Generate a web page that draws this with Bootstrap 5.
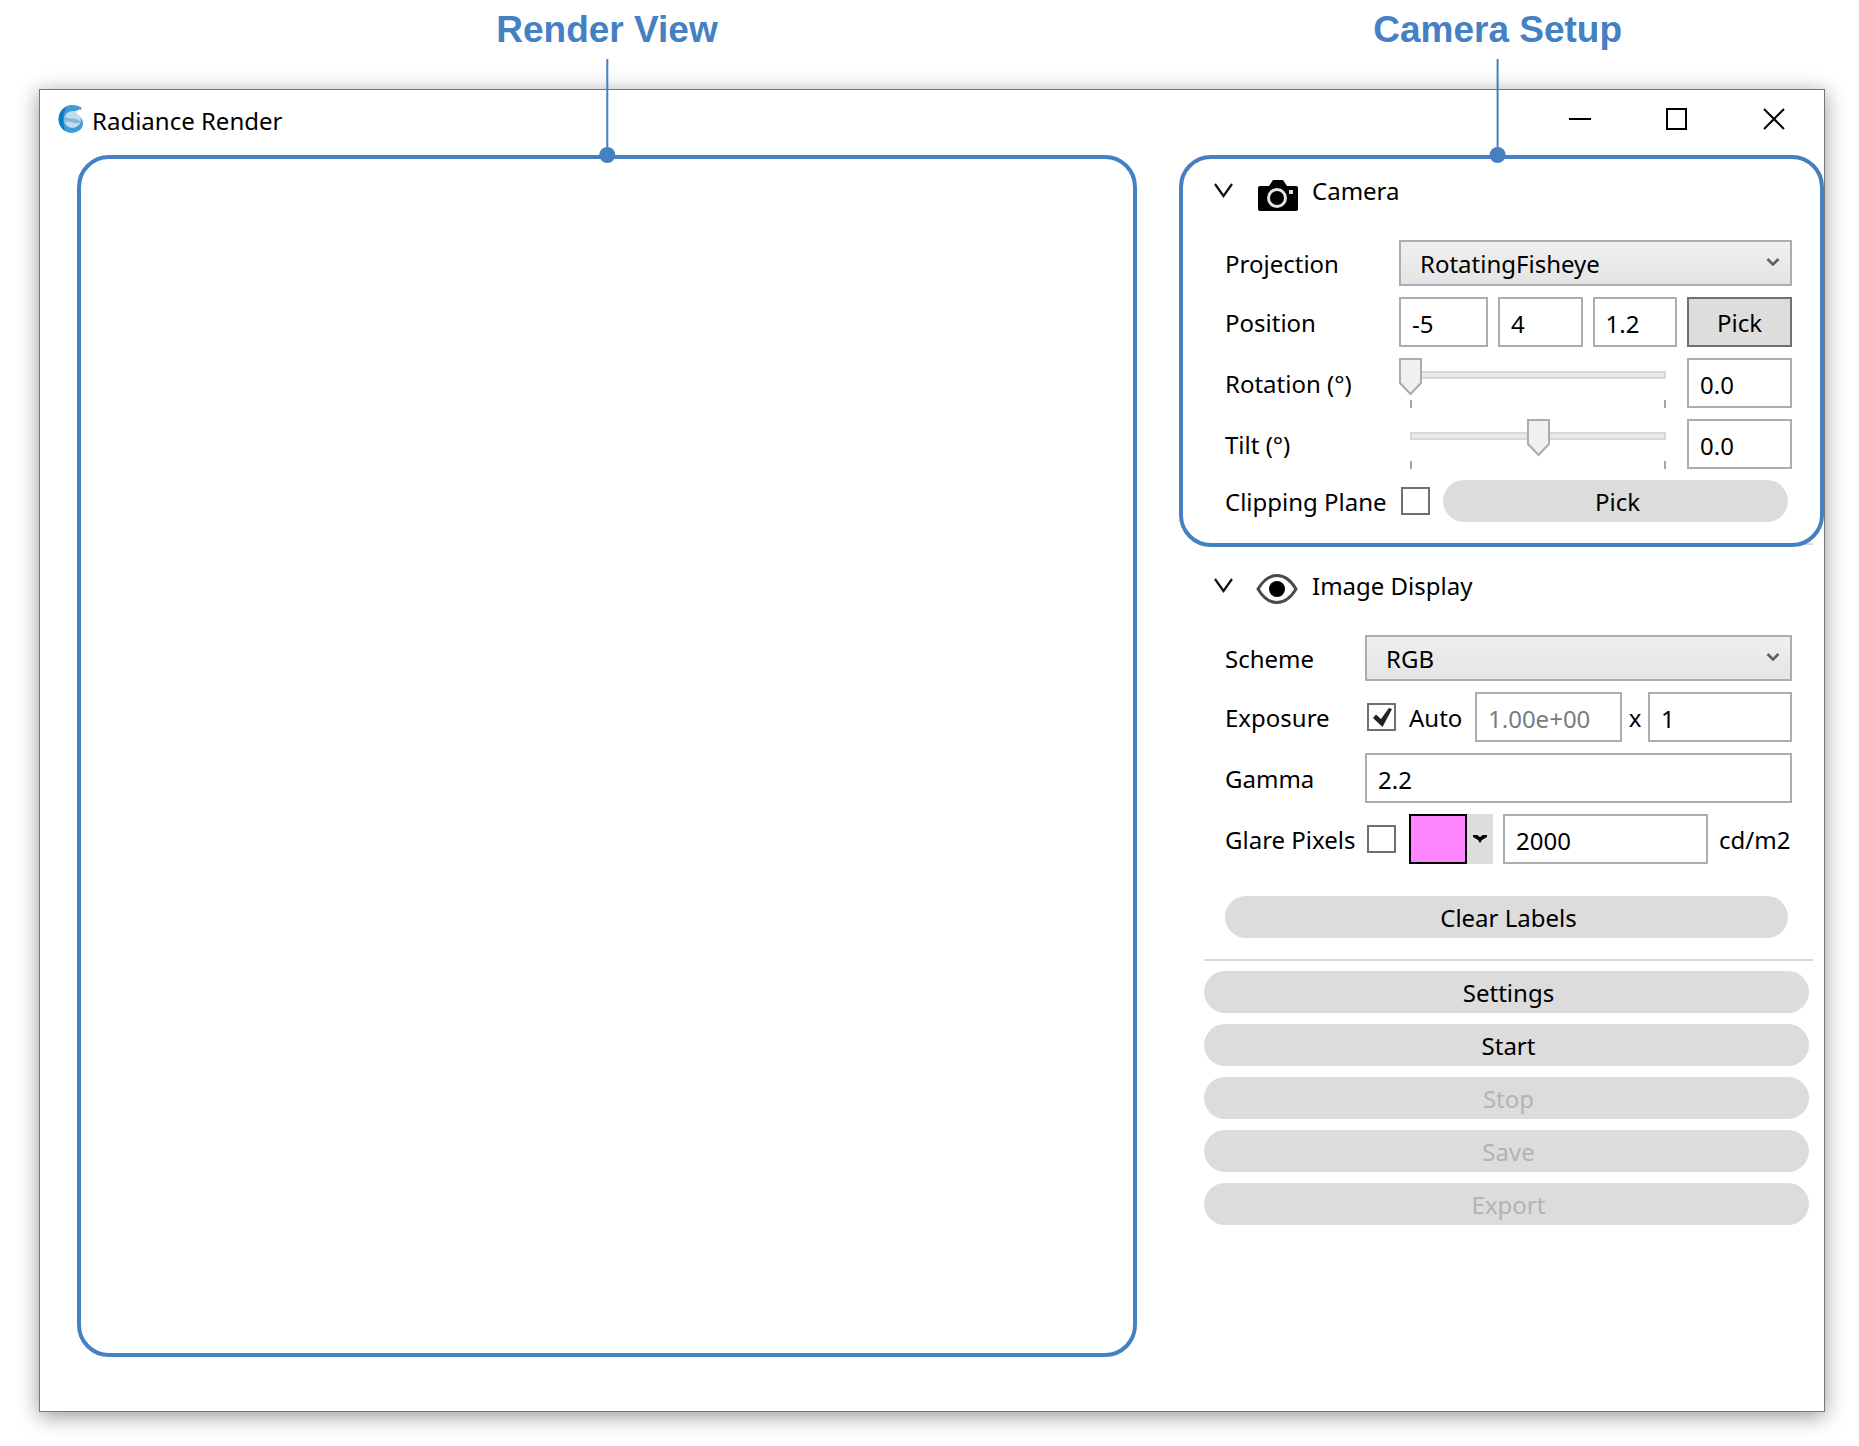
<!DOCTYPE html>
<html lang="en">
<head>
<meta charset="utf-8">
<meta name="viewport" content="width=device-width, initial-scale=1">
<title>Radiance Render</title>
<link href="https://cdn.jsdelivr.net/npm/bootstrap@5.3.0/dist/css/bootstrap.min.css" rel="stylesheet">
<style>
  :root { --note: #4480c2; --face: #dcdcdc; --edge: #abadb3; }
  body { font-family: "Noto Sans", "Open Sans", sans-serif; font-size: 24px; line-height: 32px; color: #000; background: #fff; }
  .stage { min-height: 100vh; padding: 89px 34px 34px 39px; }
  .app-window { border: 1px solid #777; background: #fff; box-shadow: 0 4px 20px rgba(0,0,0,.42); }
  .title-bar { height: 65px; padding: 0 38px 8px 18px; }
  .title-bar h1 { font-size: 24px; line-height: 32px; font-weight: 400; padding-top: 4px; }
  .win-btn { border: 0; background: none; padding: 0; width: 24px; height: 24px; display: block; }
  .win-btns { gap: 73px; }
  .work-area { padding: 0 11px 54px 37px; gap: 67px; }

  /* annotation frames and their leader lines */
  .frame { border: 4px solid var(--note); border-radius: 32px; }
  .frame-over { position: absolute; inset: 0 -11px -4px -25px; pointer-events: none; }
  .callout { position: absolute; bottom: 100%; left: 50%; transform: translateX(-50%); margin-bottom: 4px; color: var(--note);
    font: 700 37px/44px "Liberation Sans", Arial, sans-serif; white-space: nowrap; }
  .frame-over .callout { left: 49.4%; }
  .leader { width: 2px; height: 96px; background: var(--note); margin-top: 7px; }
  .leader-dot { width: 16px; height: 16px; border-radius: 50%; background: var(--note); margin: -8px 0; }

  .side-panel { flex: 0 0 609px; }
  .group { padding: 15px 0 21px; border-bottom: 2px solid #d9d9d9; margin-bottom: 5px; }
  .group-head { border: 0; background: none; padding: 0 9px; height: 42px; margin-bottom: 28px; color: #000; gap: 14px; }
  .group-head svg { height: 42px; }
  .fields { padding: 0 21px; gap: 11px; }
  .field { height: 50px; }
  .field.low { height: 46px; }
  .field.pill-row { height: 42px; padding-right: 4px; }
  .field.clear-row { margin-top: 21px; }
  .lab { flex: 0 0 140px; white-space: nowrap; }
  .wide .lab { flex-basis: 174px; }
  .lab, .auto-lab, .times, .unit { padding-top: 2px; }
  .form-control.box, .form-select.box { border: 2px solid var(--edge); border-radius: 0; color: #000; font-size: 24px; line-height: 32px; height: 100%; min-width: 0; padding: 2px 10px 0 11px; }
  .form-control.box { background: #fff; }
  .form-control.box:disabled { color: #7b7b7b; }
  .form-select.box { flex: 1; padding: 2px 40px 0 19px; background: url("data:image/svg+xml,%3Csvg xmlns='http://www.w3.org/2000/svg' width='14' height='10'%3E%3Cpath d='M1.5 2l5.5 5.500 5.500-5.500' fill='none' stroke='%23606060' stroke-width='2.600'/%3E%3C/svg%3E") right 10px top 15px / 14px 10px no-repeat, linear-gradient(#f0f0f0, #e4e4e4); }
  .axes { gap: 10px; }
  .form-control.w-x { flex: 0 0 89px; }
  .form-control.w-exp { flex: 0 0 147px; }
  .w-num { flex: 0 0 105px; }
  .square-btn { border: 2px solid #707070; background: #ddd; height: 100%; padding: 2px 0 0; color: #000; }
  .pill { border: 0; background: var(--face); border-radius: 21px; height: 42px; padding: 2px 0 0 4px; color: #000; font-size: 24px; line-height: 32px; width: 100%; }
  .pill:disabled { color: #b3b3b3; }
  .tick { appearance: none; flex: none; width: 29px; height: 28px; margin: 0 13px 0 2px; border: 2px solid #707070; background: #fff; }
  .tick:checked { background: url("data:image/svg+xml,%3Csvg xmlns='http://www.w3.org/2000/svg' width='25' height='24'%3E%3Cpath d='M4 13l3-3.500 5 4.500L20 3l3 1-9.500 18z' fill='%23222'/%3E%3C/svg%3E") center no-repeat; }
  .auto-lab { flex: 0 0 66px; }
  .times { flex: 0 0 26px; text-align: center; }
  .unit { flex: 0 0 84px; padding-left: 11px; }
  .swatch { width: 58px; height: 100%; padding: 0; border: 2px solid #000; border-radius: 0; background: #ff85ff; appearance: none; }
  .swatch::-webkit-color-swatch-wrapper { padding: 0; }
  .swatch::-webkit-color-swatch { border: 0; border-radius: 0; }
  .swatch-more { width: 26px; height: 100%; border: 0; padding: 0; background: #ddd; margin-right: 10px; }

  .slide { appearance: none; flex: 1; min-width: 0; height: 50px; margin: 0 10px 0 0;
    background:
      linear-gradient(#e7eaea, #e7eaea) 13px 15px / calc(100% - 26px) 4px no-repeat,
      linear-gradient(#d6d8d8, #d6d8d8) 11px 13px / calc(100% - 22px) 8px no-repeat,
      linear-gradient(#a4a4a4, #a4a4a4) left 11px top 42px / 2px 8px no-repeat,
      linear-gradient(#a4a4a4, #a4a4a4) right 11px top 42px / 2px 8px no-repeat; }
  .slide::-webkit-slider-runnable-track { height: 50px; }
  .slide::-webkit-slider-thumb { appearance: none; width: 23px; height: 38px;
    background: url("data:image/svg+xml,%3Csvg xmlns='http://www.w3.org/2000/svg' width='23' height='38'%3E%3Cpath d='M1 1h21v24L11.500 36 1 25z' fill='%23f0f0f0' stroke='%23acacac' stroke-width='2'/%3E%3C/svg%3E") no-repeat; }
  .actions { gap: 11px; padding: 5px 4px 0 0; }
</style>
<script src="https://cdn.jsdelivr.net/npm/bootstrap@5.3.0/dist/js/bootstrap.bundle.min.js"></script>
</head>
<body>
<div class="stage d-flex">
  <main class="app-window flex-fill d-flex flex-column">
    <header class="title-bar d-flex align-items-center">
      <svg width="26" height="30" viewBox="0 0 26 30" aria-hidden="true">
        <path d="M24 4Q20 1 14 1A13.500 14 0 0 0 14 29Q24 28 25 20Q25 15 22 13L20 9z" fill="#3f9bd5"/>
        <path d="M8 3A14 14 0 0 0 7 27Q3 15 8 3z" fill="#0a7cc2"/>
        <circle cx="14.500" cy="15.500" r="8.500" fill="#c0dcee"/>
        <path d="M6.500 12Q9 15 14 14.500T23 18Q20 20 15 18.500T6.500 18Q5.500 15 6.500 12z" fill="#7db9df"/>
        <path d="M17 7q3 0 5-2l1 5-3 1z" fill="#fff"/>
      </svg>
      <h1 class="mb-0 ms-2">Radiance Render</h1>
      <div class="win-btns d-flex ms-auto">
        <button class="win-btn" type="button" aria-label="Minimize"><svg class="d-block" width="24" height="24"><path d="M1 12h22" stroke="#000" stroke-width="2"/></svg></button>
        <button class="win-btn" type="button" aria-label="Maximize"><svg class="d-block" width="24" height="24"><path d="M2 2h19v20H2z" fill="none" stroke="#000" stroke-width="2"/></svg></button>
        <button class="win-btn" type="button" aria-label="Close"><svg class="d-block" width="24" height="24"><path d="M2 2l20 20M22 2L2 22" stroke="#000" stroke-width="2"/></svg></button>
      </div>
    </header>

    <div class="work-area d-flex flex-fill">
      <section class="frame flex-fill position-relative" aria-label="Render View">
        <div class="callout d-flex flex-column align-items-center">Render View<span class="leader"></span><span class="leader-dot"></span></div>
      </section>

      <aside class="side-panel">
        <section class="group position-relative">
          <button class="group-head d-flex align-items-center" type="button" aria-expanded="true">
            <svg width="31" viewBox="0 0 31 42" aria-hidden="true"><path d="M2 14l8.500 12L19 14" fill="none" stroke="#111" stroke-width="2.200"/></svg>
            <svg width="40" viewBox="0 0 40 42" aria-hidden="true">
              <path d="M2 16h9l4-6h10l4 6h9q2 0 2 2v21q0 2-2 2H2q-2 0-2-2V18q0-2 2-2z" fill="#000"/>
              <circle cx="19" cy="28" r="8.500" fill="#000" stroke="#e4e4e4" stroke-width="3"/>
              <rect x="31" y="20" width="4" height="4" fill="#ddd"/>
            </svg>
            <span>Camera</span>
          </button>
          <div class="fields wide d-flex flex-column">
            <div class="field low d-flex align-items-center">
              <label class="lab" for="projection">Projection</label>
              <select class="form-select box" id="projection"><option>RotatingFisheye</option></select>
            </div>
            <div class="field d-flex align-items-center">
              <label class="lab" for="posX">Position</label>
              <div class="axes d-flex flex-fill h-100">
                <input class="form-control box w-x" id="posX" value="-5">
                <input class="form-control box" aria-label="Position Y" value="4">
                <input class="form-control box" aria-label="Position Z" value="1.2">
                <button class="square-btn w-num" type="button">Pick</button>
              </div>
            </div>
            <div class="field d-flex align-items-center">
              <label class="lab" for="rotation">Rotation (°)</label>
              <input class="slide" type="range" id="rotation" min="0" max="360" value="0">
              <input class="form-control box w-num" aria-label="Rotation value" value="0.0">
            </div>
            <div class="field d-flex align-items-center">
              <label class="lab" for="tilt">Tilt (°)</label>
              <input class="slide" type="range" id="tilt" min="-90" max="90" value="0">
              <input class="form-control box w-num" aria-label="Tilt value" value="0.0">
            </div>
            <div class="field pill-row d-flex align-items-center">
              <label class="lab" for="clip">Clipping Plane</label>
              <input class="tick" type="checkbox" id="clip">
              <button class="pill" type="button">Pick</button>
            </div>
          </div>
          <div class="frame frame-over">
            <div class="callout d-flex flex-column align-items-center">Camera Setup<span class="leader"></span><span class="leader-dot"></span></div>
          </div>
        </section>

        <section class="group">
          <button class="group-head d-flex align-items-center" type="button" aria-expanded="true">
            <svg width="29" viewBox="0 0 29 42" aria-hidden="true"><path d="M2 14l8.500 12L19 14" fill="none" stroke="#111" stroke-width="2.200"/></svg>
            <svg width="42" viewBox="0 0 42 42" aria-hidden="true">
              <path d="M2 24Q10 10.500 21 10.500T40 24Q32 37.500 21 37.500T2 24z" fill="#fff" stroke="#4a4a4a" stroke-width="3"/>
              <circle cx="21" cy="24" r="8" fill="#000"/>
            </svg>
            <span>Image Display</span>
          </button>
          <div class="fields d-flex flex-column">
            <div class="field low d-flex align-items-center">
              <label class="lab" for="scheme">Scheme</label>
              <select class="form-select box" id="scheme"><option>RGB</option></select>
            </div>
            <div class="field d-flex align-items-center">
              <label class="lab" for="expo">Exposure</label>
              <input class="tick" type="checkbox" id="auto" checked>
              <label class="auto-lab" for="auto">Auto</label>
              <input class="form-control box w-exp" id="expo" value="1.00e+00" disabled>
              <span class="times">x</span>
              <input class="form-control box" aria-label="Exposure multiplier" value="1">
            </div>
            <div class="field d-flex align-items-center">
              <label class="lab" for="gamma">Gamma</label>
              <input class="form-control box" id="gamma" value="2.2">
            </div>
            <div class="field d-flex align-items-center">
              <label class="lab" for="glare">Glare Pixels</label>
              <input class="tick" type="checkbox" id="glare">
              <input class="swatch flex-shrink-0" type="color" aria-label="Glare colour" value="#ff85ff">
              <button class="swatch-more flex-shrink-0" type="button" aria-label="More colours"><svg class="d-block mx-auto" width="16" height="10"><path d="M1 1h4l3 2 3-2h4v2l-5 3-2 3-2-3-5-3z" fill="#000"/></svg></button>
              <input class="form-control box" aria-label="Glare threshold" value="2000">
              <span class="unit">cd/m2</span>
            </div>
            <div class="field pill-row clear-row d-flex">
              <button class="pill" type="button">Clear Labels</button>
            </div>
          </div>
        </section>

        <div class="actions d-flex flex-column">
          <button class="pill" type="button">Settings</button>
          <button class="pill" type="button">Start</button>
          <button class="pill" type="button" disabled>Stop</button>
          <button class="pill" type="button" disabled>Save</button>
          <button class="pill" type="button" disabled>Export</button>
        </div>
      </aside>
    </div>
  </main>
</div>
</body>
</html>
